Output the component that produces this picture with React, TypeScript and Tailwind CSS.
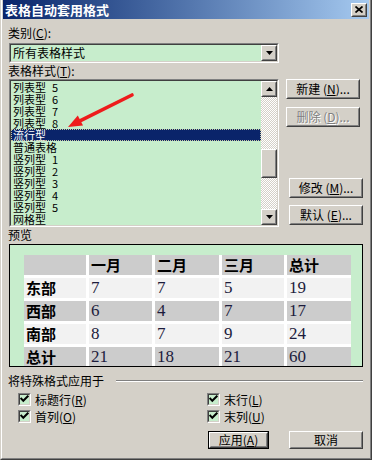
import React from "react";

function Raised({ className = "", children }: { className?: string; children?: React.ReactNode }) {
  return (
    <div className={`border border-t-white border-l-white border-r-[#404040] border-b-[#404040] bg-[#d4d0c8] ${className}`}>
      <div className="w-full h-full border border-t-[#d4d0c8] border-l-[#d4d0c8] border-r-[#808080] border-b-[#808080] flex items-center justify-center">
        {children}
      </div>
    </div>
  );
}

function Sunken({ className = "", children }: { className?: string; children?: React.ReactNode }) {
  return (
    <div className={`border border-t-[#808080] border-l-[#808080] border-r-white border-b-white ${className}`}>
      <div className="w-full h-full border border-t-[#404040] border-l-[#404040] border-r-[#d4d0c8] border-b-[#d4d0c8]">
        {children}
      </div>
    </div>
  );
}

function U({ children }: { children: React.ReactNode }) {
  return <span className="underline underline-offset-1">{children}</span>;
}

function Check() {
  return (
    <Sunken className="w-[13px] h-[13px]">
      <div className="w-full h-full bg-[#c7edcc] flex items-center justify-center">
        <svg width="9" height="9" viewBox="0 0 9 9">
          <path d="M1.3 3.6 L3.3 5.8 L7.6 1.4" fill="none" stroke="#000" strokeWidth="2" strokeLinecap="square" />
        </svg>
      </div>
    </Sunken>
  );
}

const items: [string, string][] = [
  ["列表型", "5"],
  ["列表型", "6"],
  ["列表型", "7"],
  ["列表型", "8"],
  ["流行型", ""],
  ["普通表格", ""],
  ["竖列型", "1"],
  ["竖列型", "2"],
  ["竖列型", "3"],
  ["竖列型", "4"],
  ["竖列型", "5"],
  ["网格型", ""],
];

const rows: { label: string; vals: string[]; dark: boolean }[] = [
  { label: "东部", vals: ["7", "7", "5", "19"], dark: false },
  { label: "西部", vals: ["6", "4", "7", "17"], dark: true },
  { label: "南部", vals: ["8", "7", "9", "24"], dark: false },
  { label: "总计", vals: ["21", "18", "21", "60"], dark: true },
];

export default function App() {
  return (
    <div className="w-[372px] h-[460px] bg-[#d4d0c8] border-r border-b border-l border-r-[#404040] border-b-[#404040] border-l-[#d4d0c8] text-[12px] text-black font-[family-name:'SimSun','Noto_Sans_CJK_SC',sans-serif]">
      <div className="h-full border-r border-b border-l border-r-[#808080] border-b-[#808080] border-l-white px-px pb-px flex flex-col">
        {/* title bar */}
        <div className="h-[19px] shrink-0 flex items-center justify-between bg-gradient-to-r from-[#0a246a] to-[#a6caf0] pl-[2px] pr-[2px]">
          <span className="text-white font-bold text-[13px] leading-[16px]">表格自动套用格式</span>
          <Raised className="w-[16px] h-[14px]">
            <svg width="8" height="7" viewBox="0 0 8 7">
              <path d="M0.5 0.5 L7.5 6.5 M7.5 0.5 L0.5 6.5" stroke="#000" strokeWidth="1.7" />
            </svg>
          </Raised>
        </div>

        <div className="pl-[5px] pr-[6px] flex flex-col">
          {/* category */}
          <div className="mt-[7px] h-[14px] leading-[14px]">
            类别(<U>C</U>):
          </div>
          <Sunken className="mt-[3px] ml-[1px] w-[270px] h-[20px]">
            <div className="w-full h-full bg-[#c7edcc] flex items-center justify-between">
              <span className="pl-[2px] leading-[16px]">所有表格样式</span>
              <Raised className="w-[16px] h-[16px]">
                <svg width="7" height="4" viewBox="0 0 7 4">
                  <polygon points="0,0 7,0 3.5,4" fill="#000" />
                </svg>
              </Raised>
            </div>
          </Sunken>

          <div className="mt-[1px] h-[14px] leading-[14px]">
            表格样式(<U>T</U>):
          </div>

          <div className="mt-[1px] flex">
            {/* list */}
            <div className="relative ml-[1px] w-[270px] h-[148px]">
              <Sunken className="w-full h-full">
                <div className="w-full h-full flex bg-[#c7edcc]">
                  <div className="flex-1 flex flex-col">
                    {items.map(([n, d], i) => (
                      <div
                        key={i}
                        className={
                          i === 4
                            ? "h-[12px] leading-[12px] text-[11px] pl-[2px] whitespace-nowrap bg-[#0a246a] text-white outline outline-1 outline-dotted outline-[#c8c8a0] -outline-offset-1"
                            : "h-[12px] leading-[12px] text-[11px] pl-[2px] whitespace-nowrap"
                        }
                      >
                        {n}
                        {d && <span className="ml-[6px]">{d}</span>}
                      </div>
                    ))}
                  </div>
                  {/* scrollbar */}
                  <div className="w-[16px] h-full flex flex-col bg-[repeating-conic-gradient(#d4d0c8_0_25%,#ffffff_0_50%)] bg-[length:2px_2px]">
                    <Raised className="w-[16px] h-[16px] shrink-0">
                      <svg width="7" height="4" viewBox="0 0 7 4">
                        <polygon points="0,4 7,4 3.5,0" fill="#000" />
                      </svg>
                    </Raised>
                    <Raised className="mt-[52px] w-[16px] h-[29px] shrink-0" />
                    <div className="flex-1" />
                    <Raised className="w-[16px] h-[16px] shrink-0">
                      <svg width="7" height="4" viewBox="0 0 7 4">
                        <polygon points="0,0 7,0 3.5,4" fill="#000" />
                      </svg>
                    </Raised>
                  </div>
                </div>
              </Sunken>
              <svg className="absolute left-0 top-0 pointer-events-none" width="270" height="148" viewBox="0 0 270 148">
                <line x1="123" y1="16" x2="71.5" y2="41.7" stroke="#ee1c1c" strokeWidth="3.6" strokeLinecap="round" />
                <polygon points="59,48 74,46.6 68.8,36.5" fill="#ee1c1c" />
              </svg>
            </div>

            {/* buttons */}
            <div className="ml-[7px] flex flex-col">
              <Raised className="w-[74px] h-[20px]">
                <span className="leading-[14px] whitespace-nowrap">新建 (<U>N</U>)...</span>
              </Raised>
              <Raised className="mt-[8px] w-[74px] h-[20px]">
                <span className="leading-[14px] whitespace-nowrap text-[#808080] [text-shadow:1px_1px_0_#ffffff]">删除 (<U>D</U>)...</span>
              </Raised>
              <Raised className="mt-[51px] ml-[3px] w-[74px] h-[20px]">
                <span className="leading-[14px] whitespace-nowrap">修改 (<U>M</U>)...</span>
              </Raised>
              <Raised className="mt-[7px] ml-[3px] w-[74px] h-[20px]">
                <span className="leading-[14px] whitespace-nowrap">默认 (<U>E</U>)...</span>
              </Raised>
            </div>
          </div>

          {/* preview */}
          <div className="mt-[1px] h-[14px] leading-[14px]">预览</div>
          <div className="mt-[2px] ml-[1px] w-[354px] h-[123px] border border-black bg-[#c7edcc] overflow-hidden pl-[14px] pt-[10px]">
            <div className="grid grid-cols-[62px_63px_64px_62px_64px] auto-rows-[20px] gap-[3px] bg-white w-max">
              <div className="bg-[#cccccc]" />
              {["一月", "二月", "三月", "总计"].map((h) => (
                <div key={h} className="bg-[#cccccc] flex items-center pl-[2px] font-bold text-[15px] leading-[16px]">
                  {h}
                </div>
              ))}
              {rows.map((r) => (
                <React.Fragment key={r.label}>
                  <div className={`${r.dark ? "bg-[#cccccc]" : "bg-[#f2f2f2]"} flex items-center pl-[2px] font-bold text-[15px] leading-[16px]`}>
                    {r.label}
                  </div>
                  {r.vals.map((v, j) => (
                    <div
                      key={j}
                      className={`${r.dark ? "bg-[#cccccc]" : "bg-[#f2f2f2]"} flex items-center pl-[2px] text-[17px] leading-[18px] text-[#1c1c3c] font-[family-name:'Liberation_Serif',serif]`}
                    >
                      {v}
                    </div>
                  ))}
                </React.Fragment>
              ))}
            </div>
          </div>

          {/* special format */}
          <div className="mt-[7px] h-[14px] flex items-center">
            <span className="leading-[14px] whitespace-nowrap">将特殊格式应用于</span>
            <div className="ml-[12px] flex-1 h-[2px] border-t border-b border-t-[#808080] border-b-white" />
          </div>

          <div className="mt-[5px] h-[13px] flex items-center pl-[10px]">
            <div className="w-[189px] flex items-center">
              <Check />
              <span className="ml-[4px] leading-[13px]">标题行(<U>R</U>)</span>
            </div>
            <div className="flex items-center">
              <Check />
              <span className="ml-[4px] leading-[13px]">末行(<U>L</U>)</span>
            </div>
          </div>
          <div className="mt-[4px] h-[13px] flex items-center pl-[10px]">
            <div className="w-[189px] flex items-center">
              <Check />
              <span className="ml-[4px] leading-[13px]">首列(<U>O</U>)</span>
            </div>
            <div className="flex items-center">
              <Check />
              <span className="ml-[4px] leading-[13px]">末列(<U>U</U>)</span>
            </div>
          </div>

          <div className="mt-[8px] flex justify-end gap-[20px]">
            <div className="w-[61px] h-[18px] border border-black">
              <Raised className="w-full h-full">
                <span className="leading-[12px] whitespace-nowrap">应用(<U>A</U>)</span>
              </Raised>
            </div>
            <Raised className="w-[74px] h-[18px]">
              <span className="leading-[12px]">取消</span>
            </Raised>
          </div>
        </div>
      </div>
    </div>
  );
}
